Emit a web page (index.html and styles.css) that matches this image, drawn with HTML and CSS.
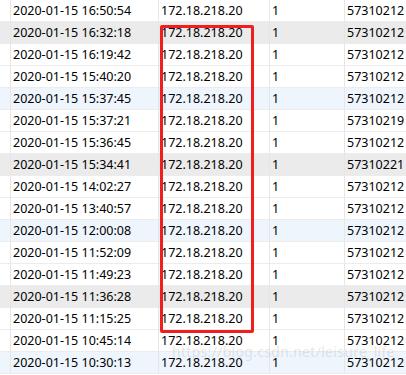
FILE: index.html
```html
<!DOCTYPE html>
<html>
<head>
<meta charset="utf-8">
<link rel="stylesheet" href="styles.css">
</head>
<body>
<div class="table">
  <div class="row"><div class="c0"></div><div class="c1">2020-01-15 16:50:54</div><div class="c2">172.18.218.20</div><div class="c3">1</div><div class="c4">57310212</div></div>
  <div class="row grey"><div class="c0"></div><div class="c1">2020-01-15 16:32:18</div><div class="c2">172.18.218.20</div><div class="c3">1</div><div class="c4">57310212</div></div>
  <div class="row"><div class="c0"></div><div class="c1">2020-01-15 16:19:42</div><div class="c2">172.18.218.20</div><div class="c3">1</div><div class="c4">57310212</div></div>
  <div class="row"><div class="c0"></div><div class="c1">2020-01-15 15:40:20</div><div class="c2">172.18.218.20</div><div class="c3">1</div><div class="c4">57310212</div></div>
  <div class="row blue"><div class="c0"></div><div class="c1">2020-01-15 15:37:45</div><div class="c2">172.18.218.20</div><div class="c3">1</div><div class="c4">57310212</div></div>
  <div class="row"><div class="c0"></div><div class="c1">2020-01-15 15:37:21</div><div class="c2">172.18.218.20</div><div class="c3">1</div><div class="c4">57310219</div></div>
  <div class="row"><div class="c0"></div><div class="c1">2020-01-15 15:36:45</div><div class="c2">172.18.218.20</div><div class="c3">1</div><div class="c4">57310212</div></div>
  <div class="row grey"><div class="c0"></div><div class="c1">2020-01-15 15:34:41</div><div class="c2">172.18.218.20</div><div class="c3">1</div><div class="c4">57310221</div></div>
  <div class="row"><div class="c0"></div><div class="c1">2020-01-15 14:02:27</div><div class="c2">172.18.218.20</div><div class="c3">1</div><div class="c4">57310212</div></div>
  <div class="row"><div class="c0"></div><div class="c1">2020-01-15 13:40:57</div><div class="c2">172.18.218.20</div><div class="c3">1</div><div class="c4">57310212</div></div>
  <div class="row blue"><div class="c0"></div><div class="c1">2020-01-15 12:00:08</div><div class="c2">172.18.218.20</div><div class="c3">1</div><div class="c4">57310212</div></div>
  <div class="row"><div class="c0"></div><div class="c1">2020-01-15 11:52:09</div><div class="c2">172.18.218.20</div><div class="c3">1</div><div class="c4">57310212</div></div>
  <div class="row"><div class="c0"></div><div class="c1">2020-01-15 11:49:23</div><div class="c2">172.18.218.20</div><div class="c3">1</div><div class="c4">57310212</div></div>
  <div class="row grey"><div class="c0"></div><div class="c1">2020-01-15 11:36:28</div><div class="c2">172.18.218.20</div><div class="c3">1</div><div class="c4">57310212</div></div>
  <div class="row"><div class="c0"></div><div class="c1">2020-01-15 11:15:25</div><div class="c2">172.18.218.20</div><div class="c3">1</div><div class="c4">57310212</div></div>
  <div class="row"><div class="c0"></div><div class="c1">2020-01-15 10:45:14</div><div class="c2">172.18.218.20</div><div class="c3">1</div><div class="c4">57310212</div></div>
  <div class="row blue"><div class="c0"></div><div class="c1">2020-01-15 10:30:13</div><div class="c2">172.18.218.20</div><div class="c3">1</div><div class="c4">57310212</div></div>
  <div class="highlight"></div>
  <div class="watermark">https://blog.csdn.net/leisure_life</div>
</div>
</body>
</html>
```
FILE: styles.css
```css
html, body {
  margin: 0;
  padding: 0;
  background: #ffffff;
}
.table {
  position: relative;
  width: 406px;
  height: 375px;
  overflow: hidden;
  font-family: "Noto Sans", "Open Sans", sans-serif;
  font-size: 12.5px;
  color: #000;
}
.row {
  display: grid;
  grid-template-columns: 11px 148px 111px 75px 1fr;
  height: 22px;
  box-sizing: border-box;
  border-bottom: 1px solid #ececec;
  background: #ffffff;
}
.row.grey { background: #ebebeb; }
.row.blue { background: #eef5fd; }
.row > div {
  box-sizing: border-box;
  border-right: 1px solid #e6e6e6;
  line-height: 21px;
  white-space: nowrap;
  overflow: hidden;
}
.c1 { padding-left: 2px; }
.c2 { padding-left: 2px; }
.c3 { padding-left: 2px; }
.c4 { padding-left: 2px; border-right: none !important; }
.highlight {
  position: absolute;
  left: 160px;
  top: 25px;
  width: 94px;
  height: 308px;
  box-sizing: border-box;
  border: 3px solid #f21d1d;
  border-radius: 2px;
}
.watermark {
  position: absolute;
  left: 172px;
  top: 342px;
  font-size: 14px;
  letter-spacing: 0.3px;
  color: rgba(160, 160, 160, 0.25);
  white-space: nowrap;
}
```
